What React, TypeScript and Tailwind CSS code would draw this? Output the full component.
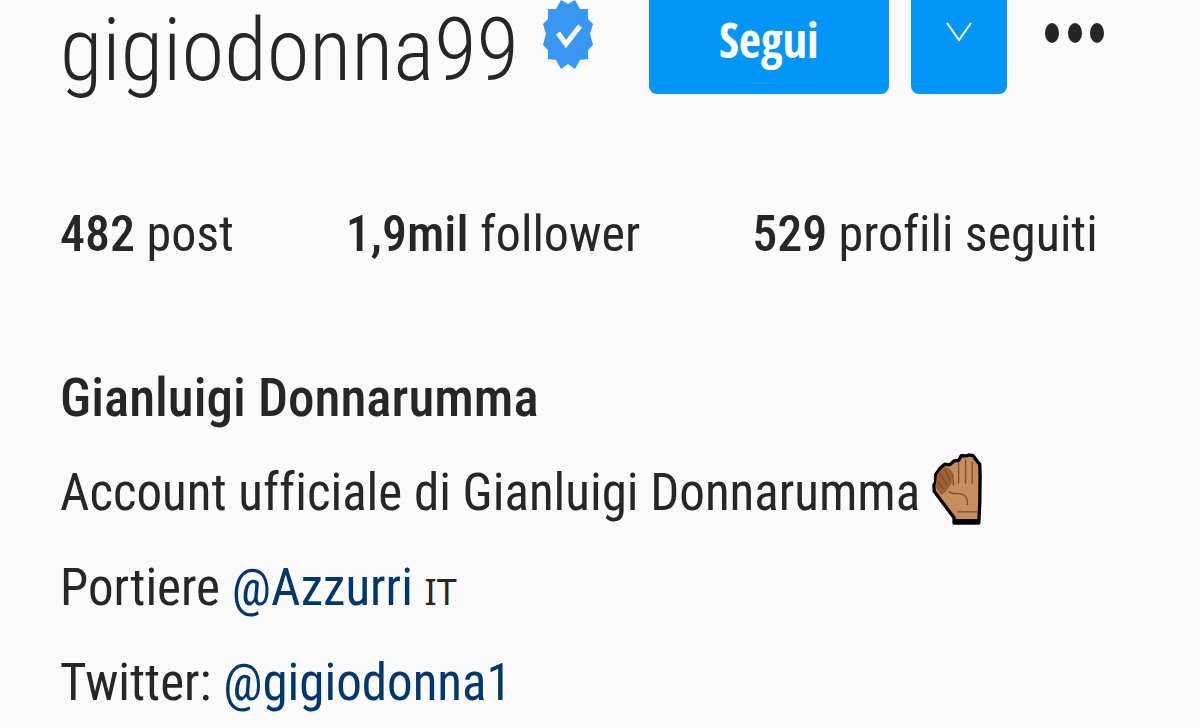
const stats = [
  { value: '482', label: 'post' },
  { value: '1,9mil', label: 'follower' },
  { value: '529', label: 'profili seguiti' },
];

function VerifiedBadge() {
  return (
    <svg role="img" aria-label="Verificato" viewBox="0 0 50 70" className="h-[70px] w-[50px] shrink-0">
      <path
        d="M18 0 L25 4 L32 0 L37 9 L45 9 L45 19 L50 24 L47 34 L50 45 L45 50 L45 59 L37 60 L32 69 L25 64 L18 69 L13 60 L5 59 L5 50 L0 45 L3 34 L0 24 L5 19 L5 9 L13 9 Z"
        fill="#3897f0"
      />
      <path d="M15 33 L23 44 L37 26" fill="none" stroke="#fff" strokeWidth="5" />
    </svg>
  );
}

function HandEmoji() {
  return (
    <svg role="img" aria-label="Mano" viewBox="0 0 150 218" className="h-[72px] w-[50px] shrink-0">
      <path
        d="M66 212 L66 196 L6 116 L5 96 L10 90 L10 66 L22 48 L38 34 L52 36 L66 24 L80 22 L88 8 L102 9 L110 6 L124 8 L132 20 L144 34 L145 70 L144 150 L141 212 Z"
        fill="#c68e5f"
        stroke="#000"
        strokeWidth="10"
        strokeLinejoin="round"
      />
      <path d="M14 68 L24 54 L38 42 L52 46 L62 60 L58 92 L42 116 L28 128 L10 104 Z" fill="#9b6035" />
      <path
        d="M24 64 L44 96 M38 50 L54 82 M17 86 L34 110 M80 28 L80 92 M101 20 L101 92 M121 26 L121 94 M62 64 L64 98 M50 116 C62 130 78 118 94 126 C108 134 108 146 106 158 M76 178 L136 178"
        fill="none"
        stroke="#7e4e2c"
        strokeWidth="4"
      />
      <path d="M66 200 L142 200 L142 212 L66 212 Z" fill="#000" />
    </svg>
  );
}

export default function App() {
  return (
    <main className="min-h-screen bg-[#fafafa] px-[60px] font-['Roboto_Condensed','Open_Sans',sans-serif] text-[51px] leading-[80px] text-[#262626] [font-variant-ligatures:none]">
      <header className="flex items-start">
        <h1 className="text-[87px] leading-[100px] font-light">gigiodonna99</h1>
        <div className="ml-6">
          <VerifiedBadge />
        </div>
        <button className="ml-14 h-[94px] w-60 shrink-0 rounded-b-lg bg-[#0095f6] pb-4 font-['Open_Sans_Condensed','Open_Sans',sans-serif] text-[48px] font-bold text-white">
          Segui
        </button>
        <button
          aria-label="Profili suggeriti"
          className="ml-[22px] flex h-[94px] w-24 shrink-0 items-start justify-center rounded-b-lg bg-[#0095f6] pt-[22px]"
        >
          <svg viewBox="0 0 26 20" className="h-5 w-[26px]">
            <path d="M1 1 L13 18 L25 1" fill="none" stroke="#fff" strokeWidth="2" />
          </svg>
        </button>
        <button aria-label="Opzioni" className="ml-[38px] pt-[23px]">
          <svg viewBox="0 0 60 20" className="h-5 w-[60px]" fill="#262626">
            <ellipse cx="7" cy="10" rx="7" ry="10" />
            <ellipse cx="30" cy="10" rx="7" ry="10" />
            <ellipse cx="52" cy="10" rx="7" ry="10" />
          </svg>
        </button>
      </header>

      <ul className="mt-[94px] flex gap-28 text-[50px] whitespace-nowrap">
        {stats.map((stat) => (
          <li key={stat.label}>
            <span className="font-medium">{stat.value}</span> {stat.label}
          </li>
        ))}
      </ul>

      <section className="mt-[84px] flex flex-col gap-[15px] whitespace-nowrap">
        <h2 className="text-[53px] font-medium">Gianluigi Donnarumma</h2>
        <p className="flex items-start gap-3">
          Account ufficiale di Gianluigi Donnarumma
          <HandEmoji />
        </p>
        <p>
          Portiere <a href="#azzurri" className="text-[#00376b]">@Azzurri</a>{' '}
          <span className="font-['Noto_Sans',sans-serif] text-[36px] leading-none">IT</span>
        </p>
        <p>
          Twitter: <a href="#gigiodonna1" className="text-[#00376b]">@gigiodonna1</a>
        </p>
      </section>
    </main>
  );
}
